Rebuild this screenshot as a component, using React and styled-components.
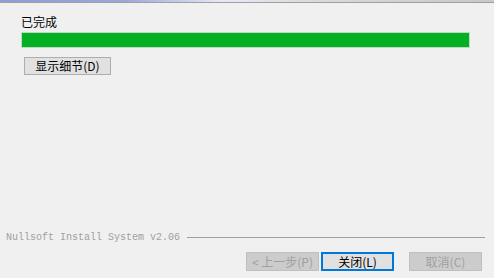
import styled, { createGlobalStyle } from 'styled-components';

const GlobalStyle = createGlobalStyle`
    html, body {
        margin: 0;
        padding: 0;
        background: #f0f0f0;
    }
    body {
        font-family: "Noto Sans CJK SC", "Liberation Sans", sans-serif;
        font-size: 12px;
        color: #000;
    }
`;

const Window = styled.div`
    width: 494px;
    height: 278px;
    display: flex;
    flex-direction: column;
    background: #f0f0f0;
    overflow: hidden;
`;

const TopRule = styled.div`
    height: 2px;
    background: linear-gradient(to right, #8f9cd6 0%, #9aa6dc 25%, #e6e9f6 45%, #d9d9d9 65%, #c8c8c8 100%);
    border-bottom: 1px solid #a0a0a0;
`;

const Body = styled.div`
    flex: 1;
    display: flex;
    flex-direction: column;
    padding: 12px 24px 0 21px;
`;

const Label = styled.div`
    height: 14px;
    line-height: 14px;
    font-size: 12px;
`;

const Track = styled.div`
    margin-top: 3px;
    height: 16px;
    width: 449px;
    box-sizing: border-box;
    background: #06b025;
    border: 1px solid #bcdcc2;
`;

const Fill = styled.div`
    height: 100%;
    background: #06b025;
`;

const Button = styled.button`
    box-sizing: border-box;
    width: ${p => p.$w || 73}px;
    height: ${p => p.$h || 19}px;
    padding: 0;
    font-family: "Noto Sans CJK SC", "Liberation Sans", sans-serif;
    font-size: 12px;
    line-height: 1;
    color: ${p => (p.disabled ? '#a0a0a0' : '#000')};
    background: ${p => (p.disabled ? '#cccccc' : '#e1e1e1')};
    border: ${p => (p.$focus ? '2px solid #0078d7' : p.disabled ? '1px solid #bfbfbf' : '1px solid #adadad')};
    display: flex;
    align-items: center;
    justify-content: center;
`;

const DetailsButton = styled(Button)`
    margin: 9px 0 0 3px;
`;

const Footer = styled.div`
    display: flex;
    flex-direction: column;
    padding: 0 12px 7px 6px;
`;

const Brand = styled.div`
    display: flex;
    align-items: center;
    height: 12px;
    padding-right: -3px;
    margin-right: -3px;
`;

const BrandText = styled.span`
    font-family: "Liberation Mono", "DejaVu Sans Mono", monospace;
    font-size: 10px;
    color: #a0a0a0;
    white-space: nowrap;
`;

const BrandRule = styled.div`
    flex: 1;
    height: 1px;
    margin-left: 7px;
    background: #a0a0a0;
`;

const Actions = styled.div`
    margin-top: 9px;
    display: flex;
    justify-content: flex-end;
    gap: 2px;
`;

const Spacer = styled.div`
    width: 11px;
`;

export default function App() {
    return (
        <Window>
            <GlobalStyle />
            <TopRule />
            <Body>
                <Label>已完成</Label>
                <Track>
                    <Fill style={{ width: '100%' }} />
                </Track>
                <DetailsButton $w={87} $h={18}>显示细节(D)</DetailsButton>
            </Body>
            <Footer>
                <Brand>
                    <BrandText>Nullsoft Install System v2.06</BrandText>
                    <BrandRule />
                </Brand>
                <Actions>
                    <Button disabled>&lt; 上一步(P)</Button>
                    <Button $focus>关闭(L)</Button>
                    <Spacer />
                    <Button disabled>取消(C)</Button>
                </Actions>
            </Footer>
        </Window>
    );
}
